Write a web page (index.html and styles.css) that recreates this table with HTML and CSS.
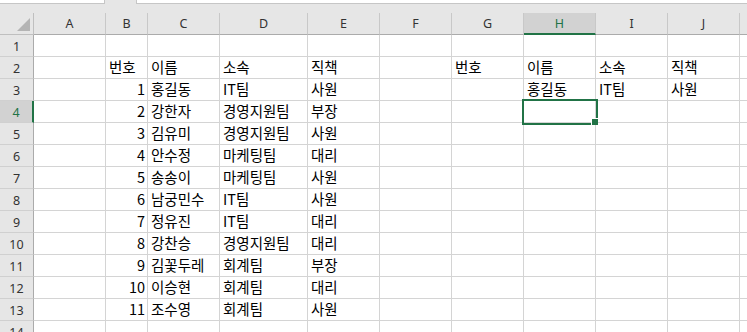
FILE: index.html
```html
<!DOCTYPE html>
<html lang="ko">
<head>
<meta charset="utf-8">
<title>Sheet</title>
<link rel="stylesheet" href="styles.css">
</head>
<body>
<div class="app">
  <div class="topbar">
    <div class="namebox"></div>
    <div class="formulabox"></div>
  </div>
  <div class="sheet">
    <div class="corner"><span class="tri"></span></div>
    <div class="ch">A</div><div class="ch">B</div><div class="ch">C</div><div class="ch">D</div><div class="ch">E</div><div class="ch">F</div><div class="ch">G</div><div class="ch sel">H</div><div class="ch">I</div><div class="ch">J</div><div class="ch"></div>

    <div class="rh">1</div><div class="c"></div><div class="c"></div><div class="c"></div><div class="c"></div><div class="c"></div><div class="c"></div><div class="c"></div><div class="c"></div><div class="c"></div><div class="c"></div><div class="c"></div>

    <div class="rh">2</div><div class="c"></div><div class="c">번호</div><div class="c">이름</div><div class="c">소속</div><div class="c">직책</div><div class="c"></div><div class="c">번호</div><div class="c">이름</div><div class="c">소속</div><div class="c">직책</div><div class="c"></div>

    <div class="rh">3</div><div class="c"></div><div class="c n">1</div><div class="c">홍길동</div><div class="c">IT팀</div><div class="c">사원</div><div class="c"></div><div class="c"></div><div class="c">홍길동</div><div class="c">IT팀</div><div class="c">사원</div><div class="c"></div>

    <div class="rh sel">4</div><div class="c"></div><div class="c n">2</div><div class="c">강한자</div><div class="c">경영지원팀</div><div class="c">부장</div><div class="c"></div><div class="c"></div><div class="c active"><span class="selbox"><span class="handle"></span></span></div><div class="c"></div><div class="c"></div><div class="c"></div>

    <div class="rh">5</div><div class="c"></div><div class="c n">3</div><div class="c">김유미</div><div class="c">경영지원팀</div><div class="c">사원</div><div class="c"></div><div class="c"></div><div class="c"></div><div class="c"></div><div class="c"></div><div class="c"></div>

    <div class="rh">6</div><div class="c"></div><div class="c n">4</div><div class="c">안수정</div><div class="c">마케팅팀</div><div class="c">대리</div><div class="c"></div><div class="c"></div><div class="c"></div><div class="c"></div><div class="c"></div><div class="c"></div>

    <div class="rh">7</div><div class="c"></div><div class="c n">5</div><div class="c">송송이</div><div class="c">마케팅팀</div><div class="c">사원</div><div class="c"></div><div class="c"></div><div class="c"></div><div class="c"></div><div class="c"></div><div class="c"></div>

    <div class="rh">8</div><div class="c"></div><div class="c n">6</div><div class="c">남궁민수</div><div class="c">IT팀</div><div class="c">사원</div><div class="c"></div><div class="c"></div><div class="c"></div><div class="c"></div><div class="c"></div><div class="c"></div>

    <div class="rh">9</div><div class="c"></div><div class="c n">7</div><div class="c">정유진</div><div class="c">IT팀</div><div class="c">대리</div><div class="c"></div><div class="c"></div><div class="c"></div><div class="c"></div><div class="c"></div><div class="c"></div>

    <div class="rh">10</div><div class="c"></div><div class="c n">8</div><div class="c">강찬승</div><div class="c">경영지원팀</div><div class="c">대리</div><div class="c"></div><div class="c"></div><div class="c"></div><div class="c"></div><div class="c"></div><div class="c"></div>

    <div class="rh">11</div><div class="c"></div><div class="c n">9</div><div class="c">김꽃두레</div><div class="c">회계팀</div><div class="c">부장</div><div class="c"></div><div class="c"></div><div class="c"></div><div class="c"></div><div class="c"></div><div class="c"></div>

    <div class="rh">12</div><div class="c"></div><div class="c n">10</div><div class="c">이승현</div><div class="c">회계팀</div><div class="c">대리</div><div class="c"></div><div class="c"></div><div class="c"></div><div class="c"></div><div class="c"></div><div class="c"></div>

    <div class="rh">13</div><div class="c"></div><div class="c n">11</div><div class="c">조수영</div><div class="c">회계팀</div><div class="c">사원</div><div class="c"></div><div class="c"></div><div class="c"></div><div class="c"></div><div class="c"></div><div class="c"></div>

    <div class="rh">14</div><div class="c"></div><div class="c"></div><div class="c"></div><div class="c"></div><div class="c"></div><div class="c"></div><div class="c"></div><div class="c"></div><div class="c"></div><div class="c"></div><div class="c"></div>
  </div>
</div>
</body>
</html>
```
FILE: styles.css
```css
html, body {
  margin: 0;
  padding: 0;
  background: #e6e6e6;
  overflow: hidden;
}
.app {
  width: 747px;
  height: 332px;
  overflow: hidden;
  display: flex;
  flex-direction: column;
}
.topbar {
  height: 13px;
  flex: 0 0 13px;
  display: flex;
  align-items: flex-start;
  background: #e6e6e6;
}
.namebox {
  width: 105px;
  height: 4px;
  box-sizing: border-box;
  background: #fff;
  border-right: 1px solid #c6c6c6;
  border-bottom: 1px solid #c6c6c6;
}
.formulabox {
  margin-left: 31px;
  flex: 1;
  height: 4px;
  box-sizing: border-box;
  background: #fff;
  border-left: 1px solid #c6c6c6;
  border-bottom: 1px solid #c6c6c6;
}
.sheet {
  display: grid;
  grid-template-columns: 34px 72px 42px 72px 88px 72px 72px 72px 72px 72px 72px 72px;
  grid-auto-rows: 22px;
  background: #fff;
  font-family: "Noto Sans CJK KR", "Noto Sans", sans-serif;
}
.corner {
  background: #e6e6e6;
  border-right: 1px solid #bfbfbf;
  border-bottom: 1px solid #bfbfbf;
  box-sizing: border-box;
  display: flex;
  justify-content: flex-end;
  align-items: flex-end;
  padding: 0 3px 3px 0;
}
.tri {
  width: 13px;
  height: 13px;
  background: #b4b4b4;
  clip-path: polygon(100% 0, 100% 100%, 0 100%);
}
.ch {
  background: #e6e6e6;
  border-right: 1px solid #c8c8c8;
  border-bottom: 1px solid #ababab;
  box-sizing: border-box;
  display: flex;
  align-items: center;
  justify-content: center;
  font-family: "Noto Sans", sans-serif;
  font-size: 12.5px;
  color: #333;
  padding-bottom: 1px;
}
.ch.sel {
  background: #d2d2d2;
  color: #217346;
  border-bottom: 2px solid #217346;
  padding-bottom: 0;
}
.rh {
  background: #e6e6e6;
  border-right: 1px solid #ababab;
  border-bottom: 1px solid #d0d0d0;
  box-sizing: border-box;
  display: flex;
  align-items: center;
  justify-content: center;
  font-family: "Noto Sans", sans-serif;
  font-size: 12.5px;
  color: #333;
  padding-top: 1px;
}
.rh.sel {
  background: #d2d2d2;
  color: #217346;
  border-right: 2px solid #217346;
}
.c {
  box-sizing: border-box;
  border-right: 1px solid #d4d4d4;
  border-bottom: 1px solid #d4d4d4;
  padding: 0 2px 0 3px;
  font-size: 14.5px;
  line-height: 19px;
  color: #000;
  white-space: nowrap;
}
.c.n {
  text-align: right;
}
.c.active {
  position: relative;
}
.selbox {
  position: absolute;
  left: -2px;
  top: -2px;
  width: 76px;
  height: 26px;
  box-sizing: border-box;
  border: 2px solid #217346;
  z-index: 2;
}
.handle {
  position: absolute;
  right: -2px;
  bottom: -2px;
  width: 6px;
  height: 6px;
  background: #217346;
  border-left: 1px solid #fff;
  border-top: 1px solid #fff;
}
```
